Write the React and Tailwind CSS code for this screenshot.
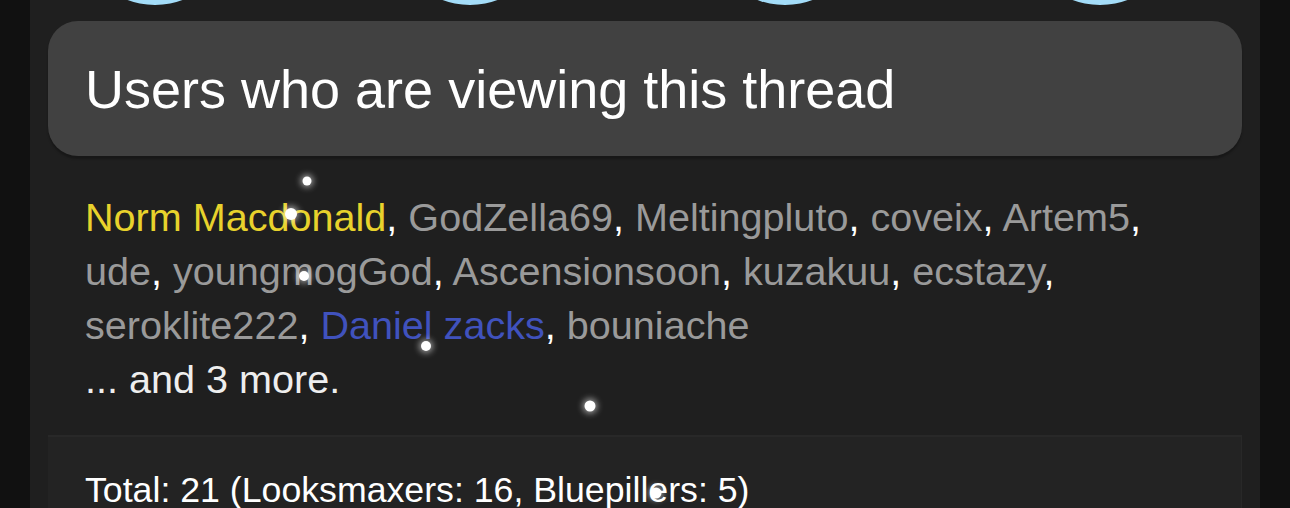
export default function App() {
  const users = [
    { name: 'Norm Macdonald', color: 'text-[#e8d22c]' },
    { name: 'GodZella69' },
    { name: 'Meltingpluto' },
    { name: 'coveix' },
    { name: 'Artem5' },
    { name: 'ude' },
    { name: 'youngmogGod' },
    { name: 'Ascensionsoon' },
    { name: 'kuzakuu' },
    { name: 'ecstazy' },
    { name: 'seroklite222' },
    { name: 'Daniel zacks', color: 'text-[#4052bd]' },
    { name: 'bouniache' },
  ]

  const dots = [
    { x: 307, y: 181, s: 'w-[9px] h-[9px]' },
    { x: 291, y: 214, s: 'w-[12px] h-[12px]' },
    { x: 304, y: 276, s: 'w-[10px] h-[10px]' },
    { x: 426, y: 346, s: 'w-[10px] h-[10px]' },
    { x: 590, y: 406, s: 'w-[11px] h-[11px]' },
    { x: 656, y: 493, s: 'w-[11px] h-[11px]' },
  ]

  return (
    <div className="relative w-[1290px] h-[508px] overflow-hidden bg-[#111111] font-['Liberation_Sans',Arial,sans-serif]">
      <div className="mx-[30px] h-full bg-[#1f1f1f]">
        {/* bottoms of the avatars above */}
        <div className="flex h-[21px] overflow-hidden pl-[47px] gap-[159px]">
          {[0, 1, 2, 3].map(i => (
            <div key={i} className="shrink-0 w-[156px] h-[156px] mt-[-151px] rounded-full bg-[#a3dcf8]" />
          ))}
        </div>

        <div className="mx-[18px]">
          <div className="rounded-[30px] bg-[#414141] px-[37px] pt-[38px] pb-[37px] shadow-[0_3px_2px_rgba(0,0,0,0.25)]">
            <h2 className="text-[54px] leading-[60px] text-white">Users who are viewing this thread</h2>
          </div>

          <div className="px-[37px] pt-[34px] pb-[26px] text-[39.6px] leading-[54px] text-white">
            <div>
              {users.map((u, i) => (
                <span key={u.name}>
                  <span className={u.color || 'text-[#9a9a9a]'}>{u.name}</span>
                  {i < users.length - 1 && ', '}
                </span>
              ))}
            </div>
            <div className="text-[#eeeeee]">... and 3 more.</div>
          </div>

          <div className="mt-[3px] border-t-[2px] border-r border-[#282828] bg-[#232323] px-[37px] pt-[28px] text-[35.7px] leading-[50px] text-white">
            Total: 21 (Looksmaxers: 16, Bluepillers: 5)
          </div>
        </div>
      </div>

      {dots.map((d, i) => (
        <div
          key={i}
          className={`absolute rounded-full bg-white shadow-[0_0_6px_2px_rgba(255,255,255,0.55)] -translate-x-1/2 -translate-y-1/2 ${d.s}`}
          style={{ left: d.x, top: d.y }}
        />
      ))}
    </div>
  )
}
